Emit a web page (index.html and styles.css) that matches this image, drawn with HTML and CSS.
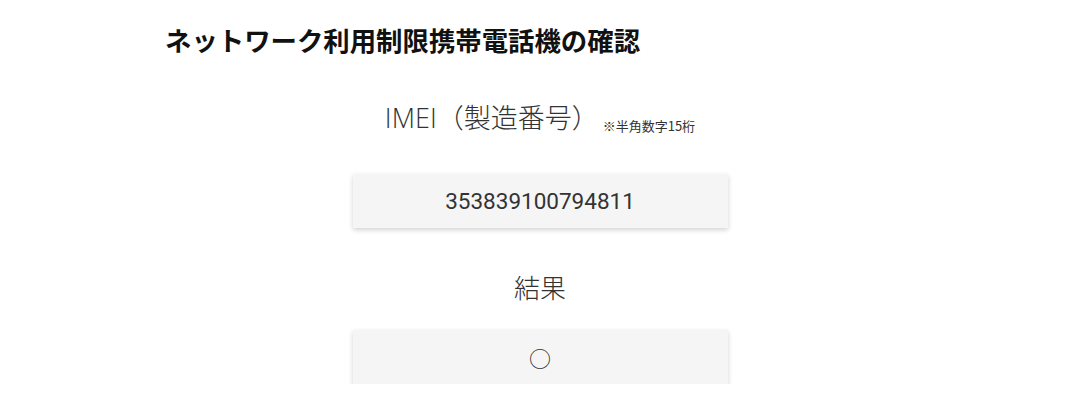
FILE: index.html
```html
<!DOCTYPE html>
<html lang="ja">
<head>
<meta charset="utf-8">
<title>ネットワーク利用制限携帯電話機の確認</title>
<link rel="stylesheet" href="styles.css">
</head>
<body>
<div class="page">
  <h1 class="title">ネットワーク利用制限携帯電話機の確認</h1>
  <div class="form">
    <div class="label label-imei">IMEI（製造番号）<span class="note">※半角数字15桁</span></div>
    <div class="field field-imei">353839100794811</div>
    <div class="label label-result">結果</div>
    <div class="field field-result">○</div>
  </div>
</div>
</body>
</html>
```
FILE: styles.css
```css
html, body {
  margin: 0;
  padding: 0;
  background: #ffffff;
}
body {
  font-family: "Noto Sans CJK JP", sans-serif;
  color: #333333;
}
.page {
  padding-top: 22px;
}
.title {
  margin: 0 0 0 165px;
  font-family: "Noto Sans CJK JP", sans-serif;
  font-size: 26.4px;
  font-weight: 700;
  line-height: 36px;
  color: #111111;
}
.form {
  display: flex;
  flex-direction: column;
  align-items: center;
}
.label {
  font-family: "Noto Sans CJK JP", sans-serif;
  font-size: 26px;
  font-weight: 300;
  line-height: 36px;
  color: #333333;
}
.label-imei {
  margin-top: 42px;
  font-family: "Open Sans", "Noto Sans CJK JP", sans-serif;
  font-size: 27px;
}
.note {
  font-family: "Noto Sans CJK JP", sans-serif;
  font-size: 13px;
  font-weight: 400;
  margin-left: 4px;
  position: relative;
  top: 3px;
}
.label-result {
  margin-top: 41px;
}
.field {
  width: 375px;
  height: 54px;
  background: #f5f5f5;
  box-shadow: 0 2px 5px rgba(0, 0, 0, 0.18);
  display: flex;
  align-items: center;
  justify-content: center;
  font-family: Roboto, "Noto Sans CJK JP", sans-serif;
  font-size: 22.5px;
  font-weight: 400;
  color: #333333;
}
.field-imei {
  margin-top: 33px;
}
.field-result {
  margin-top: 25px;
  font-family: "Noto Sans CJK JP", sans-serif;
  font-size: 22px;
}
```
